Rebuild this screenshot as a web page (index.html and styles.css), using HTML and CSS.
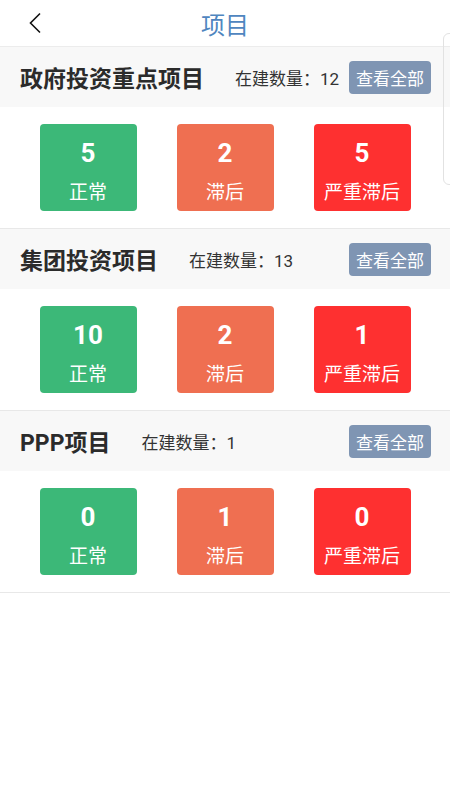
FILE: index.html
```html
<!DOCTYPE html>
<html lang="zh">
<head>
    <meta charset="UTF-8">
    <meta name="viewport" content="width=device-width, initial-scale=1.0">
    <title>项目</title>
    <link rel="stylesheet" href="styles.css">
</head>
<body>

    <div class="nav">
        <span class="back">
            <svg width="14" height="22" viewBox="0 0 14 22"><path d="M12 1.5 L2.5 11 L12 20.5" fill="none" stroke="#111" stroke-width="1.6"/></svg>
        </span>
        <span class="nav-title">项目</span>
    </div>

    <div class="section">
        <div class="sec-head">
            <span class="sec-title">政府投资重点项目</span>
            <span class="sec-count">在建数量：12</span>
            <button class="all-btn">查看全部</button>
        </div>
        <div class="cards">
            <div class="card green"><span class="num">5</span><span class="label">正常</span></div>
            <div class="card orange"><span class="num">2</span><span class="label">滞后</span></div>
            <div class="card red"><span class="num">5</span><span class="label">严重滞后</span></div>
        </div>
    </div>

    <div class="section">
        <div class="sec-head">
            <span class="sec-title">集团投资项目</span>
            <span class="sec-count">在建数量：13</span>
            <button class="all-btn">查看全部</button>
        </div>
        <div class="cards">
            <div class="card green"><span class="num">10</span><span class="label">正常</span></div>
            <div class="card orange"><span class="num">2</span><span class="label">滞后</span></div>
            <div class="card red"><span class="num">1</span><span class="label">严重滞后</span></div>
        </div>
    </div>

    <div class="section">
        <div class="sec-head">
            <span class="sec-title">PPP项目</span>
            <span class="sec-count">在建数量：1</span>
            <button class="all-btn">查看全部</button>
        </div>
        <div class="cards">
            <div class="card green"><span class="num">0</span><span class="label">正常</span></div>
            <div class="card orange"><span class="num">1</span><span class="label">滞后</span></div>
            <div class="card red"><span class="num">0</span><span class="label">严重滞后</span></div>
        </div>
    </div>

    <div class="side-tab"></div>

</body>
</html>
```

FILE: styles.css
```css
body {
    margin: 0;
    height: 800px;
    background: #fff;
    font-family: "Roboto", "Noto Sans CJK SC", sans-serif;
    color: #333;
    overflow: hidden;
    position: relative;
}
.nav {
    height: 46px;
    display: flex;
    align-items: center;
    justify-content: center;
    position: relative;
    border-bottom: 1px solid #ececec;
}
.back {
    position: absolute;
    left: 28px;
    top: 12px;
    display: flex;
}
.nav-title {
    font-size: 24px;
    color: #4f86bf;
}
.section {
    border-bottom: 1px solid #e8e8e8;
}
.sec-head {
    height: 60px;
    background: #f8f8f8;
    display: flex;
    align-items: center;
    padding: 0 19px 0 20px;
}
.sec-title {
    font-size: 23px;
    font-weight: bold;
    color: #2b2b2b;
}
.sec-count {
    font-size: 17px;
    margin-left: 31px;
    color: #333;
}
.all-btn {
    margin-left: auto;
    height: 33px;
    padding: 0 7px;
    border: none;
    border-radius: 4px;
    background: #7f95b3;
    color: #fff;
    font-family: "Noto Sans CJK SC", sans-serif;
    font-size: 17px;
}
.cards {
    display: flex;
    justify-content: center;
    gap: 40px;
    padding: 17px 0;
}
.card {
    width: 97px;
    height: 87px;
    border-radius: 4px;
    display: flex;
    flex-direction: column;
    align-items: center;
    padding-top: 13px;
    box-sizing: border-box;
    color: #fff;
}
.num {
    font-size: 26px;
    font-weight: bold;
    line-height: 32px;
}
.label {
    font-family: "Noto Sans CJK SC", sans-serif;
    font-size: 19px;
    line-height: 26px;
    margin-top: 9px;
}
.green {
    background: #3cb878;
}
.orange {
    background: #ef6f51;
}
.red {
    background: #fe3030;
}
.side-tab {
    position: absolute;
    left: 443px;
    top: 33px;
    width: 20px;
    height: 150px;
    border: 1px solid #e2e2e2;
    border-radius: 6px;
}
```
